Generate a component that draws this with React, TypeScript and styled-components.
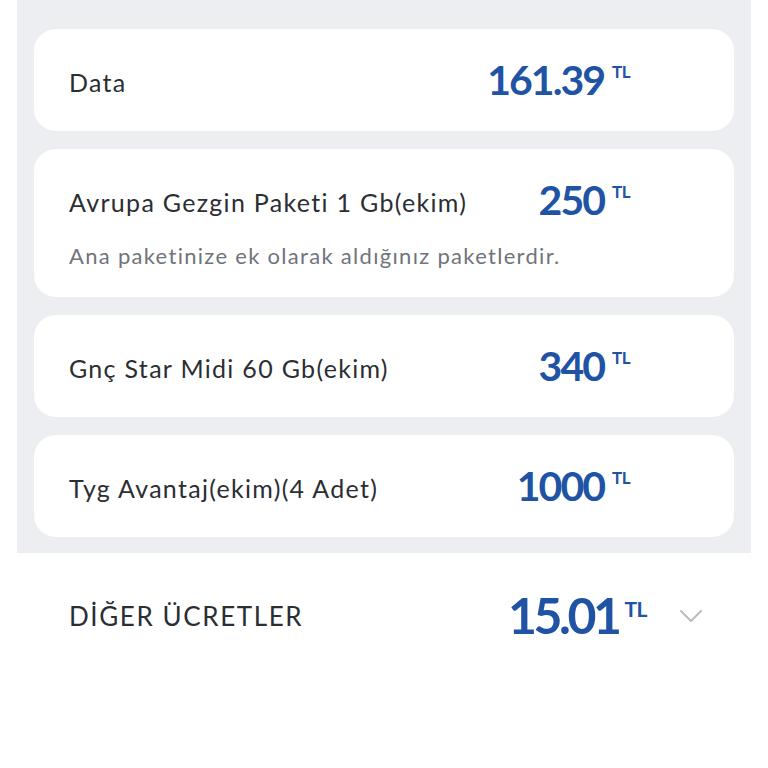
import React from "react";
import styled, { createGlobalStyle } from "styled-components";

const GlobalStyle = createGlobalStyle`
  body {
    margin: 0;
    background: #ffffff;
    font-family: "Lato", "Noto Sans", sans-serif;
  }
`;

interface iItem {
  title: string;
  price: string;
  sub?: string;
}

const items: iItem[] = [
  { title: "Data", price: "161.39" },
  {
    title: "Avrupa Gezgin Paketi 1 Gb(ekim)",
    price: "250",
    sub: "Ana paketinize ek olarak aldığınız paketlerdir.",
  },
  { title: "Gnç Star Midi 60 Gb(ekim)", price: "340" },
  { title: "Tyg Avantaj(ekim)(4 Adet)", price: "1000" },
];

const Price: React.FC<{ value: string; big?: boolean }> = ({ value, big }) => (
  <PriceHold>
    <Amount big={big}>{value}</Amount>
    <Currency big={big}>TL</Currency>
  </PriceHold>
);

const App: React.FC = () => {
  return (
    <>
      <GlobalStyle />
      <Panel>
        {items.map((item) => (
          <Card key={item.title} tall={!!item.sub}>
            <Row>
              <Title>{item.title}</Title>
              <Price value={item.price} />
            </Row>
            {item.sub && <Sub>{item.sub}</Sub>}
          </Card>
        ))}
      </Panel>
      <Other>
        <OtherTitle>DİĞER ÜCRETLER</OtherTitle>
        <OtherRight>
          <Price value="15.01" big />
          <Chevron viewBox="0 0 24 14" fill="none">
            <path d="M2 2l10 10L22 2" stroke="#b9bcc1" strokeWidth="2" strokeLinecap="round" strokeLinejoin="round" />
          </Chevron>
        </OtherRight>
      </Other>
    </>
  );
};

export default App;

const Panel = styled.div`
  margin-left: 17px;
  width: 734px;
  box-sizing: border-box;
  background: #eceef1;
  padding: 29px 17px 16px;
  display: flex;
  flex-direction: column;
  gap: 18px;
`;

const Card = styled.div<{ tall: boolean }>`
  background: #ffffff;
  border-radius: 22px;
  min-height: ${({ tall }) => (tall ? "148px" : "102px")};
  box-sizing: border-box;
  padding: 0 104px 0 35px;
  display: flex;
  flex-direction: column;
  justify-content: center;
`;

const Row = styled.div`
  display: flex;
  align-items: center;
  justify-content: space-between;
`;

const Title = styled.div`
  font-size: 25px;
  letter-spacing: 1.3px;
  color: #2b2e33;
  margin-top: 4px;
`;

const Sub = styled.div`
  font-size: 22px;
  letter-spacing: 1.3px;
  color: #70747b;
  margin-top: 20px;
`;

const PriceHold = styled.div`
  display: flex;
  align-items: flex-start;
  color: #2153a5;
  font-weight: 700;
`;

const Amount = styled.span<{ big?: boolean }>`
  font-size: ${({ big }) => (big ? "50px" : "41px")};
  letter-spacing: ${({ big }) => (big ? "-3.5px" : "-2px")};
  line-height: 1.1;
`;

const Currency = styled.span<{ big?: boolean }>`
  font-size: ${({ big }) => (big ? "21px" : "17px")};
  margin-left: ${({ big }) => (big ? "6px" : "8px")};
  margin-top: ${({ big }) => (big ? "8px" : "4px")};
  letter-spacing: -0.5px;
`;

const Other = styled.div`
  height: 125px;
  display: flex;
  align-items: center;
  justify-content: space-between;
  padding: 0 65px 0 69px;
`;

const OtherTitle = styled.div`
  font-size: 26px;
  letter-spacing: 1.6px;
  color: #2b2e33;
`;

const OtherRight = styled.div`
  display: flex;
  align-items: center;
  gap: 32px;
`;

const Chevron = styled.svg`
  width: 24px;
  height: 14px;
`;
